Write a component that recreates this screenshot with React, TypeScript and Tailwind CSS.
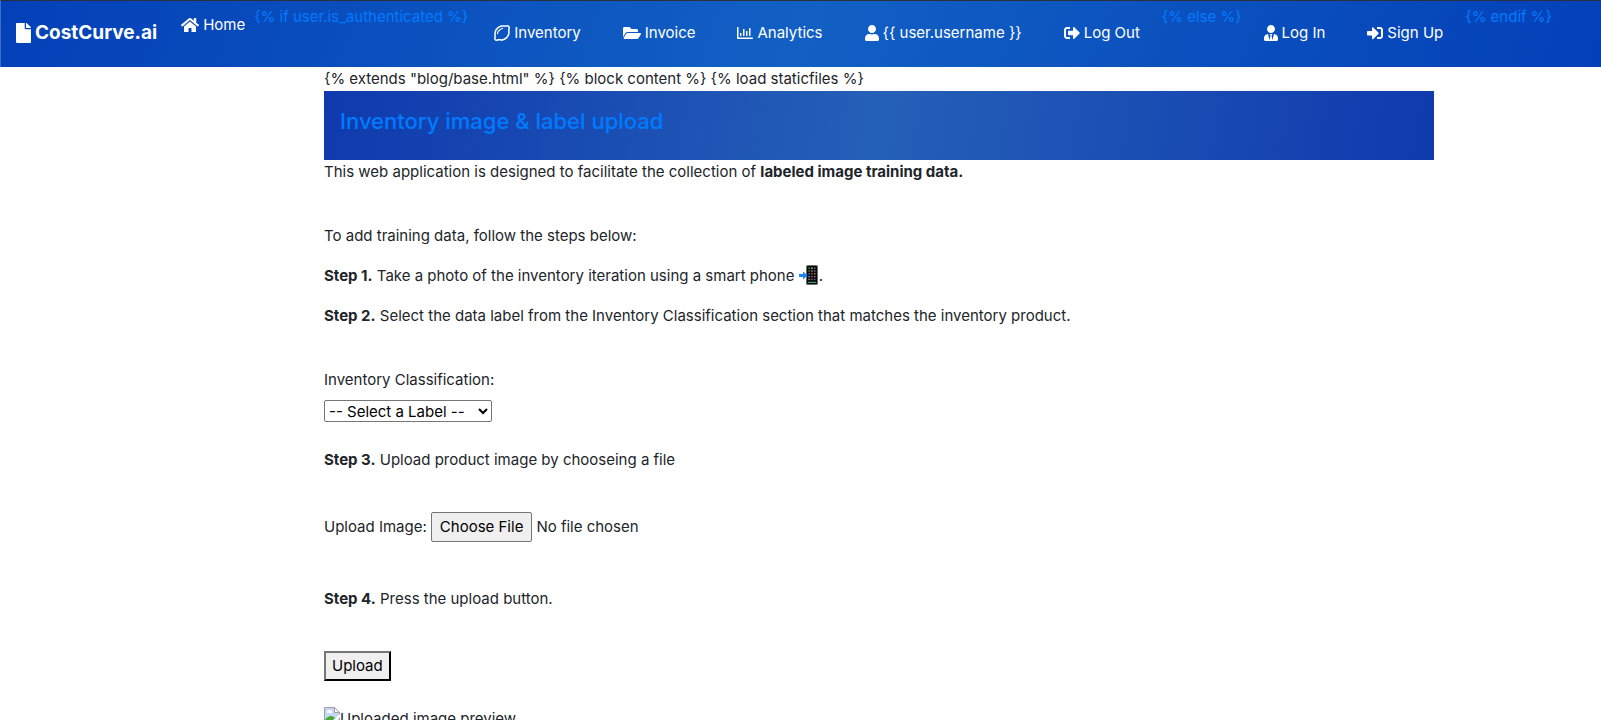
import type { ReactNode } from "react";
import {
  FaFile,
  FaFolderOpen,
  FaHome,
  FaRegChartBar,
  FaRegLemon,
  FaSignInAlt,
  FaSignOutAlt,
  FaUser,
  FaUserTie,
} from "react-icons/fa";

function NavLink({ icon, children }: { icon: ReactNode; children: ReactNode }) {
  return (
    <a href="#" className="flex items-center gap-1 text-white">
      {icon}
      <span>{children}</span>
    </a>
  );
}

function TemplateTag({ children }: { children: ReactNode }) {
  return <span className="text-[#007bff]">{children}</span>;
}

const keyRows = [
  ["#3d9a4a", "#b9b9c0", "#4a8d55"],
  ["#507c3c", "#d0803c", "#596ab0"],
  ["#2d7fc0", "#d04a58", "#a08a40"],
  ["#3b9fe0", "#c04090", "#707880"],
  ["#909090", "#c04a30", "#5060a0"],
];

function PhoneWithArrow() {
  return (
    <svg role="img" aria-label="mobile phone with arrow" viewBox="0 0 20 20" className="inline-block size-5 align-text-bottom">
      <rect x="7" y="0" width="12" height="20" rx="1.5" fill="#6a6f72" />
      <rect x="8" y="1" width="10" height="18" rx="1" fill="#090909" />
      <path d="M0 9h4V6.500l4.500 4-4.500 4V12H0z" fill="#1a86f0" />
      {keyRows.map((row, y) =>
        row.map((color, x) => (
          <rect key={`${x}-${y}`} x={9.3 + x * 2.8} y={2.5 + y * 2.8} width="1.6" height="1.4" fill={color} />
        )),
      )}
      <rect x="9" y="16.800" width="8" height="1.200" fill="#3f9f72" />
    </svg>
  );
}

function BrokenImage() {
  return (
    <svg aria-hidden="true" viewBox="0 0 16 16" className="size-4 shrink-0">
      <path d="M.5.5h10l5 5v10H.5z" fill="#c3d7f8" stroke="#a0a0a0" />
      <path d="M10.500.5v5h5z" fill="#fff" stroke="#a0a0a0" />
      <path d="M3 6a1.500 1.500 0 0 1 1-2.500 2 2 0 0 1 3.500.5A1.200 1.200 0 0 1 8 6z" fill="#fff" />
      <path d="M1 15v-2c2-3 4-4 6-4s3 1 4 2l-4 4z" fill="#4ca832" />
      <path d="M7 15.500 16 7v3l-5.500 6z" fill="#fff" />
    </svg>
  );
}

export default function App() {
  return (
    <div className="h-screen overflow-hidden bg-white font-['Inter',sans-serif] text-[15px] leading-6 text-[#212529]">
      <nav className="flex h-[67px] items-start border-t border-l border-t-[#2c3038] border-l-[#3d6cc9] bg-[linear-gradient(110deg,#0340b8_0%,#1260c4_50%,#0340b8_100%)] pt-1 pl-[15px] whitespace-nowrap">
        <a href="#" className="mt-4 mr-6 flex items-center gap-1 text-[19px] leading-6 font-bold text-white">
          <FaFile className="h-5 w-[15px]" />
          CostCurve.ai
        </a>
        <div className="mt-2 mr-[9px]">
          <NavLink icon={<FaHome className="size-[18px]" />}>Home</NavLink>
        </div>
        <div className="flex items-start gap-[22px]">
          <TemplateTag>{"{% if user.is_authenticated %}"}</TemplateTag>
          <div className="mt-4 ml-1 flex items-center gap-[42px]">
            <NavLink icon={<FaRegLemon className="size-4" />}>Inventory</NavLink>
            <NavLink icon={<FaFolderOpen className="size-[18px]" />}>Invoice</NavLink>
            <NavLink icon={<FaRegChartBar className="size-4" />}>Analytics</NavLink>
            <NavLink icon={<FaUser className="h-4 w-[14px]" />}>{"{{ user.username }}"}</NavLink>
            <NavLink icon={<FaSignOutAlt className="size-4" />}>Log Out</NavLink>
          </div>
          <TemplateTag>{"{% else %}"}</TemplateTag>
          <div className="mt-4 flex items-center gap-[42px]">
            <NavLink icon={<FaUserTie className="h-4 w-[14px]" />}>Log In</NavLink>
            <NavLink icon={<FaSignInAlt className="size-4" />}>Sign Up</NavLink>
          </div>
          <TemplateTag>{"{% endif %}"}</TemplateTag>
        </div>
      </nav>

      <div className="pl-[157px]">
        <main className="mx-auto max-w-[1110px]">
          <div>{'{% extends "blog/base.html" %} {% block content %} {% load staticfiles %}'}</div>
          <header className="bg-[linear-gradient(100deg,#0f3aae_0%,#2560b8_50%,#0f3aae_100%)] px-4 pt-4 pb-6">
            <h1 className="text-[22px] leading-[29px] font-medium text-[#007bff]">Inventory image &amp; label upload</h1>
          </header>
          <p className="mb-10">
            This web application is designed to facilitate the collection of <b>labeled image training data.</b>
          </p>
          <p className="mb-4">To add training data, follow the steps below:</p>
          <p className="mb-4">
            <b>Step 1.</b> Take a photo of the inventory iteration using a smart phone <PhoneWithArrow />.
          </p>
          <p className="mb-10">
            <b>Step 2.</b> Select the data label from the Inventory Classification section that matches the inventory product.
          </p>
          <form onSubmit={(event) => event.preventDefault()}>
            <label htmlFor="classification" className="mb-2 block">
              Inventory Classification:
            </label>
            <select
              id="classification"
              className="mb-[26px] block h-[22px] w-[168px] rounded-xs border border-[#767676] bg-white leading-5 text-black"
            >
              <option>-- Select a Label --</option>
            </select>
            <p className="mb-10">
              <b>Step 3.</b> Upload product image by chooseing a file
            </p>
            <div className="mb-[45px] flex h-[30px] items-center gap-1">
              <label htmlFor="image">Upload Image:</label>
              <input
                id="image"
                type="file"
                className="file:mr-1 file:h-[30px] file:rounded-xs file:border file:border-solid file:border-[#767676] file:bg-[#efefef] file:px-2 file:text-black"
              />
            </div>
            <p className="mb-10">
              <b>Step 4.</b> Press the upload button.
            </p>
            <button
              type="submit"
              className="mb-[26px] block h-[30px] border-2 border-t-[#767676] border-r-black border-b-black border-l-[#767676] bg-[#efefef] px-1.5 leading-6 text-black"
            >
              Upload
            </button>
          </form>
          <div className="flex items-start">
            <BrokenImage />
            <span>Uploaded image preview</span>
          </div>
        </main>
      </div>
    </div>
  );
}
